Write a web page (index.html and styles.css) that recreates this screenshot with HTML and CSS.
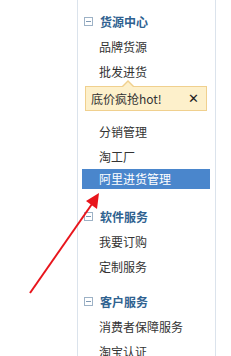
FILE: index.html
```html
<!DOCTYPE html>
<html>
<head>
<meta charset="utf-8">
<link rel="stylesheet" href="styles.css">
</head>
<body>
<div class="page">
  <div class="sidebar">
    <div class="section">
      <div class="head"><span class="box"></span><span class="title">货源中心</span></div>
      <ul class="items">
        <li>品牌货源</li>
        <li>批发进货</li>
      </ul>
      <div class="tip"><span class="tip-text">底价疯抢hot!</span><span class="close">✕</span></div>
      <ul class="items after-tip">
        <li>分销管理</li>
        <li>淘工厂</li>
        <li class="active">阿里进货管理</li>
      </ul>
    </div>
    <div class="section s2">
      <div class="head"><span class="box"></span><span class="title">软件服务</span></div>
      <ul class="items">
        <li>我要订购</li>
        <li>定制服务</li>
      </ul>
    </div>
    <div class="section s3">
      <div class="head"><span class="box"></span><span class="title">客户服务</span></div>
      <ul class="items">
        <li>消费者保障服务</li>
        <li>淘宝认证</li>
      </ul>
    </div>
  </div>
  <svg class="arrow" width="231" height="356" viewBox="0 0 231 356">
    <line x1="30" y1="293" x2="92" y2="204" stroke="#e8151c" stroke-width="2"/>
    <polygon points="99,193 86,201 97,209" fill="#e8151c"/>
  </svg>
</div>
</body>
</html>
```

FILE: styles.css
```css
html, body {
  margin: 0;
  padding: 0;
  background: #ffffff;
}
.page {
  position: relative;
  width: 231px;
  height: 356px;
  overflow: hidden;
  font-family: "Noto Sans CJK SC", "Noto Sans", sans-serif;
  font-size: 12px;
  color: #333333;
}
.sidebar {
  margin-left: 77px;
  width: 139px;
  height: 356px;
  border-left: 1px solid #dbe3ec;
  border-right: 1px solid #dbe3ec;
  padding: 9px 5px 0 4px;
  box-sizing: border-box;
}
.head {
  display: flex;
  align-items: center;
  height: 24px;
}
.box {
  width: 7px;
  height: 7px;
  margin-left: 2px;
  border: 1px solid #9db2c6;
  position: relative;
  flex: none;
}
.box::after {
  content: "";
  position: absolute;
  left: 1px;
  right: 1px;
  top: 3px;
  height: 1px;
  background: #7f99b3;
}
.title {
  margin-left: 7px;
  font-weight: bold;
  color: #2f6290;
}
.items {
  list-style: none;
  margin: 1px 0 0 0;
  padding: 0;
}
.items li {
  height: 25px;
  line-height: 25px;
  padding-left: 17px;
  white-space: nowrap;
}
.items li.active {
  height: 20px;
  line-height: 20px;
  background: #4a86cc;
  color: #ffffff;
}
.after-tip {
  margin-top: 8px;
}
.tip {
  position: relative;
  margin: 2px 0 0 3px;
  width: 122px;
  height: 25px;
  box-sizing: border-box;
  background: #fdf0cb;
  border: 1px solid #f0d08e;
  display: flex;
  align-items: center;
  justify-content: space-between;
  padding: 0 7px 0 5px;
}
.tip::before {
  content: "";
  position: absolute;
  left: 35px;
  top: -7px;
  width: 0;
  height: 0;
  border-left: 7px solid transparent;
  border-right: 7px solid transparent;
  border-bottom: 7px solid #f0d08e;
}
.tip::after {
  content: "";
  position: absolute;
  left: 36px;
  top: -5px;
  width: 0;
  height: 0;
  border-left: 6px solid transparent;
  border-right: 6px solid transparent;
  border-bottom: 6px solid #fdf0cb;
}
.tip-text {
  color: #333333;
}
.close {
  font-family: "DejaVu Sans", sans-serif;
  font-size: 13px;
  font-weight: bold;
  color: #222222;
}
.s2 {
  margin-top: 15px;
}
.s3 {
  margin-top: 10px;
}
.arrow {
  position: absolute;
  left: 0;
  top: 0;
}
```
